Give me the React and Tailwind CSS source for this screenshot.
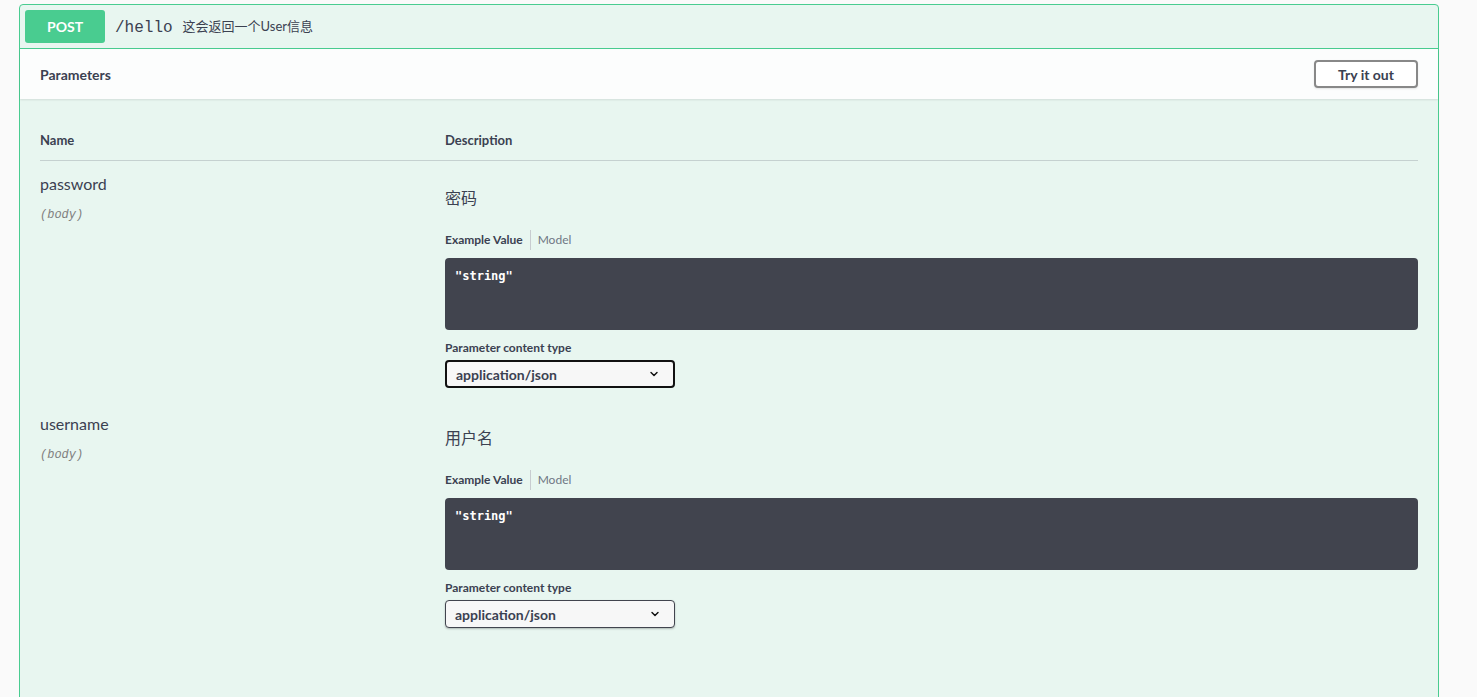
import React from "react";

const FONT = { fontFamily: 'Lato, "Noto Sans CJK SC", sans-serif' };

function Chevron() {
  return (
    <svg width="12" height="12" viewBox="0 0 20 20" className="shrink-0">
      <path d="M5 7.5 L10 12.5 L15 7.5" fill="none" stroke="#111" strokeWidth="2.4" strokeLinecap="round" strokeLinejoin="round" />
    </svg>
  );
}

function ParamRow({ name, desc, focused }) {
  return (
    <div className="flex pt-[13px] pb-[13px]">
      <div className="w-[405px] shrink-0">
        <div className="text-[16px] leading-[20px] text-[#3b4151]">{name}</div>
        <div className="mt-[13px] text-[12px] leading-[16px] italic text-[#808080] font-['Liberation_Mono',monospace]">(body)</div>
      </div>
      <div className="flex-1 flex flex-col pt-[12px]">
        <div className="text-[16px] leading-[24px] text-[#3b4151]">{desc}</div>
        <div className="mt-[22px] flex items-center h-[16px] text-[12px] leading-[16px]">
          <span className="font-bold text-[#3b4151]">Example Value</span>
          <span className="mx-[7px] w-px h-[20px] bg-[#c8ccd0]" />
          <span className="text-[#6f7684]">Model</span>
        </div>
        <div className="mt-[10px] h-[72px] rounded-[4px] bg-[#41444e] px-[10px] py-[10px]">
          <div className="text-white font-bold text-[12px] leading-[16px] font-['DejaVu_Sans_Mono',monospace]">"string"</div>
        </div>
        <div className="mt-[10px] text-[12px] leading-[16px] font-bold text-[#3b4151]">Parameter content type</div>
        <div
          className={
            "mt-[4px] w-[230px] h-[28px] rounded-[4px] bg-[#f7f7f7] flex items-center justify-between pl-[9px] pr-[13px] " +
            (focused ? "border-2 border-[#111]" : "border border-[#41444e] shadow-[0_1px_2px_rgba(0,0,0,0.25)]")
          }
        >
          <span className="text-[14px] font-bold text-[#3b4151]">application/json</span>
          <Chevron />
        </div>
      </div>
    </div>
  );
}

export default function App() {
  return (
    <div className="h-[697px] overflow-hidden bg-[#fafafa] pt-[4px]" style={FONT}>
      <div className="ml-[19px] w-[1420px] h-[760px] border border-[#49cc90] rounded-[4px] bg-[#e8f6f0]">
        <div className="flex items-center p-[5px] border-b border-[#49cc90]">
          <div className="w-[80px] h-[33px] rounded-[3px] bg-[#49cc90] flex items-center justify-center text-white font-bold text-[14px]">
            POST
          </div>
          <span className="ml-[10px] mt-[3px] text-[16px] text-[#3b4151] font-['Liberation_Mono',monospace]">/hello</span>
          <span className="ml-[10px] mt-[1px] text-[13px] text-[#3b4151]">这会返回一个User信息</span>
        </div>
        <div className="h-[50px] bg-[#fcfdfd] shadow-[0_1px_2px_rgba(0,0,0,0.1)] flex items-center justify-between px-[20px]">
          <span className="text-[14px] font-bold text-[#3b4151]">Parameters</span>
          <button className="w-[104px] h-[28px] border-2 border-[#888] rounded-[4px] bg-white text-[14px] font-bold text-[#3b4151] shadow-[0_1px_2px_rgba(0,0,0,0.1)]">
            Try it out
          </button>
        </div>
        <div className="px-[20px] pt-[20px]">
          <div className="flex pt-[13px] pb-[12px] border-b border-[rgba(59,65,81,0.2)] text-[13px] leading-[16px] font-bold text-[#3b4151]">
            <div className="w-[405px]">Name</div>
            <div>Description</div>
          </div>
          <ParamRow name="password" desc="密码" focused />
          <ParamRow name="username" desc="用户名" />
        </div>
      </div>
    </div>
  );
}
